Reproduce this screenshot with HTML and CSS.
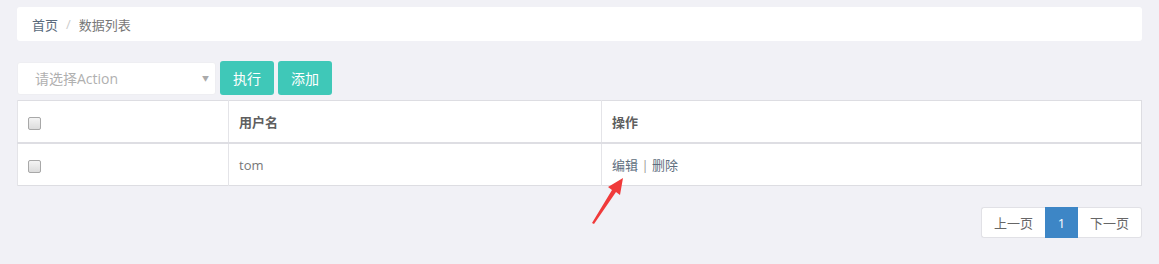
FILE: index.html
```html
<!DOCTYPE html>
<html lang="zh-CN">
<head>
<meta charset="utf-8">
<title>数据列表</title>
<link rel="stylesheet" href="styles.css">
</head>
<body>
<div class="page">
  <div class="crumb">
    <a class="crumb-link" href="#">首页</a>
    <span class="crumb-sep">/</span>
    <span class="crumb-current">数据列表</span>
  </div>

  <div class="toolbar">
    <div class="select">
      <span class="select-text">请选择Action</span>
      <span class="select-arrow">▼</span>
    </div>
    <button class="btn">执行</button>
    <button class="btn">添加</button>
  </div>

  <table class="grid">
    <thead>
      <tr>
        <th class="c1"><span class="cb"></span></th>
        <th class="c2">用户名</th>
        <th class="c3">操作</th>
      </tr>
    </thead>
    <tbody>
      <tr>
        <td class="c1"><span class="cb"></span></td>
        <td class="c2">tom</td>
        <td class="c3"><a href="#" class="op">编辑</a> <span class="bar">|</span> <a href="#" class="op">删除</a></td>
      </tr>
    </tbody>
  </table>

  <div class="pager">
    <a href="#" class="pg">上一页</a>
    <a href="#" class="pg active">1</a>
    <a href="#" class="pg">下一页</a>
  </div>

  <svg class="arrow" width="40" height="50" viewBox="0 0 40 50">
    <path d="M4 45 L24 12 L20 9 L35 0 L32 17 L28 14 L6 46 Z" fill="#f03a3a"/>
  </svg>
</div>
</body>
</html>
```

FILE: styles.css
```css
html, body {
  margin: 0;
  padding: 0;
  background: #f1f1f6;
  font-family: "Open Sans", "Noto Sans CJK SC", sans-serif;
  font-size: 13px;
  color: #676a6c;
}
.page {
  position: relative;
  padding: 7px 17px;
}
.crumb {
  height: 34px;
  background: #fff;
  border-radius: 3px;
  display: flex;
  align-items: center;
  padding: 0 15px;
}
.crumb-link {
  color: #5a6b7c;
  text-decoration: none;
}
.crumb-sep {
  color: #ccc;
  padding: 0 8px;
}
.crumb-current {
  color: #777;
}
.toolbar {
  margin-top: 20px;
  display: flex;
  align-items: center;
  gap: 4px;
}
.select {
  width: 199px;
  height: 33px;
  box-sizing: border-box;
  background: #fff;
  border-radius: 3px;
  display: flex;
  align-items: center;
  justify-content: space-between;
  padding: 0 6px 0 17px;
  border: 1px solid #eeeef2;
}
.select-text {
  color: #b0b0b0;
  font-size: 14px;
}
.select-arrow {
  color: #aaa;
  font-size: 7px;
}
.btn {
  width: 54px;
  height: 34px;
  border: none;
  border-radius: 3px;
  background: #3fc8b8;
  color: #fff;
  font-family: inherit;
  font-size: 14px;
  padding: 0;
}
.grid {
  margin-top: 5px;
  width: 100%;
  border-collapse: collapse;
  background: #fff;
  border: 1px solid #dddde2;
}
.grid th, .grid td {
  border-left: 1px solid #e4e4e8;
  text-align: left;
  padding: 0 10px;
}
.grid th {
  height: 41px;
  font-weight: bold;
  color: #5f5f5f;
  border-bottom: 2px solid #dedee3;
}
.grid td {
  height: 41px;
  color: #777;
}
.c1 { width: 190px; }
.c2 { width: 352px; }
.cb {
  display: inline-block;
  width: 11px;
  height: 11px;
  border: 1px solid #a8a8a8;
  border-radius: 2px;
  background: linear-gradient(#f4f4f4, #dcdcdc);
  vertical-align: middle;
}
.op {
  color: #5e6e80;
  text-decoration: none;
}
.bar {
  color: #999;
  padding: 0;
}
.pager {
  margin-top: 21px;
  display: flex;
  justify-content: flex-end;
}
.pg {
  height: 31px;
  box-sizing: border-box;
  display: flex;
  align-items: center;
  padding: 0 12px;
  background: #fff;
  border: 1px solid #e1e1e6;
  color: #666;
  text-decoration: none;
}
.pg:first-child {
  border-radius: 3px 0 0 3px;
  border-right: none;
}
.pg:last-child {
  border-radius: 0 3px 3px 0;
  border-left: none;
}
.pg.active {
  background: #3d86c6;
  border-color: #3d86c6;
  color: #fff;
  width: 33px;
  justify-content: center;
  padding: 0;
}
.arrow {
  position: absolute;
  left: 588px;
  top: 178px;
}
```
